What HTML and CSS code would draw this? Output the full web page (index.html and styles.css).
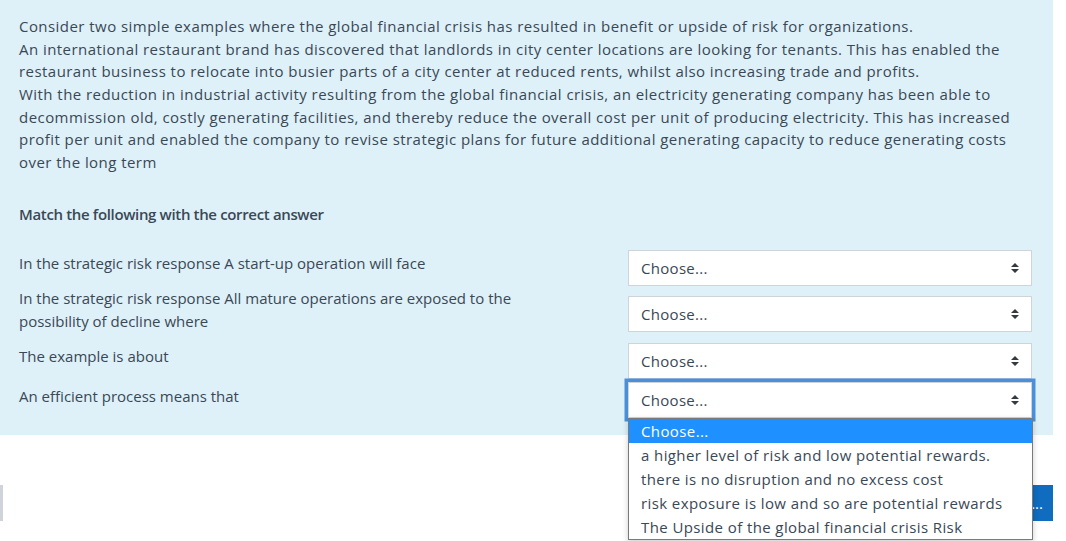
FILE: index.html
```html
<!DOCTYPE html>
<html lang="en">
<head>
  <meta charset="UTF-8">
  <title>Quiz question</title>
  <link rel="stylesheet" href="styles.css">
</head>
<body>

<div class="page">
  <div class="formulation">
    <div class="qtext">
      Consider two simple examples where the global financial crisis has resulted in benefit or upside of risk for organizations.<br>
      An international restaurant brand has discovered that landlords in city center locations are looking for tenants. This has enabled the restaurant business to relocate into busier parts of a city center at reduced rents, whilst also increasing trade and profits.<br>
      With the reduction in industrial activity resulting from the global financial crisis, an electricity generating company has been able to decommission old, costly generating facilities, and thereby reduce the overall cost per unit of producing electricity. This has increased profit per unit and enabled the company to revise strategic plans for future additional generating capacity to reduce generating costs over the long term
    </div>

    <div class="prompt">Match the following with the correct answer</div>

    <div class="answers">
      <div class="sub-row">
        <div class="sub-text">In the strategic risk response A start-up operation will face</div>
        <div class="select">
          <span>Choose...</span>
          <svg class="caret" width="8" height="10" viewBox="0 0 8 10"><path d="M4 0L8 4H0z M0 6H8L4 10z" fill="#343a40"/></svg>
        </div>
      </div>
      <div class="sub-row">
        <div class="sub-text">In the strategic risk response All mature operations are exposed to the possibility of decline where</div>
        <div class="select">
          <span>Choose...</span>
          <svg class="caret" width="8" height="10" viewBox="0 0 8 10"><path d="M4 0L8 4H0z M0 6H8L4 10z" fill="#343a40"/></svg>
        </div>
      </div>
      <div class="sub-row">
        <div class="sub-text">The example is about</div>
        <div class="select">
          <span>Choose...</span>
          <svg class="caret" width="8" height="10" viewBox="0 0 8 10"><path d="M4 0L8 4H0z M0 6H8L4 10z" fill="#343a40"/></svg>
        </div>
      </div>
      <div class="sub-row active">
        <div class="sub-text">An efficient process means that</div>
        <div class="select focused">
          <span>Choose...</span>
          <svg class="caret" width="8" height="10" viewBox="0 0 8 10"><path d="M4 0L8 4H0z M0 6H8L4 10z" fill="#343a40"/></svg>
          <ul class="options">
            <li class="selected">Choose...</li>
            <li>a higher level of risk and low potential rewards.</li>
            <li>there is no disruption and no excess cost</li>
            <li>risk exposure is low and so are potential rewards</li>
            <li>The Upside of the global financial crisis Risk</li>
          </ul>
        </div>
      </div>
    </div>
  </div>

  <div class="submitbtns">
    <div class="btn btn-prev"></div>
    <button class="btn btn-next">Finish attempt ...</button>
  </div>
</div>

</body>
</html>
```

FILE: styles.css
```css
body {
  font-family: 'Open Sans', sans-serif;
  font-size: 15px;
  color: #3a4856;
  background-color: white;
  margin: 0;
  padding: 0;
}

.page {
  width: 1053px;
  padding-bottom: 40px;
}

.formulation {
  background-color: #def1f8;
  padding: 15px 21px 17px 19px;
}

.qtext {
  line-height: 22.67px;
  letter-spacing: 0.45px;
}

.prompt {
  margin-top: 29px;
  font-weight: 600;
  line-height: 23px;
  letter-spacing: -0.35px;
}

.answers {
  margin-top: 16px;
}

.sub-row {
  display: flex;
  align-items: center;
  justify-content: space-between;
  margin-bottom: 1.5px;
}

.sub-row.active {
  margin-top: -6px;
  margin-bottom: 0;
}

.sub-text {
  width: 540px;
  line-height: 23px;
}

.select {
  position: relative;
  width: 404px;
  height: 36px;
  margin-top: 8px;
  box-sizing: border-box;
  border: 1px solid #ced4da;
  background-color: white;
  display: flex;
  align-items: center;
  justify-content: space-between;
  padding: 0 12px 0 12px;
  letter-spacing: 0.3px;
}

.select.focused {
  box-shadow: 0 0 0 3.5px #4a90d9;
}

.caret {
  display: block;
}

.options {
  position: absolute;
  top: 35px;
  left: -1px;
  width: 405px;
  box-sizing: border-box;
  margin: 0;
  padding: 0;
  list-style: none;
  background-color: white;
  border: 1px solid #7a7a7a;
  box-shadow: 0 2px 6px rgba(0,0,0,0.2);
  letter-spacing: 0.4px;
  z-index: 2;
}

.options li {
  height: 24px;
  line-height: 24px;
  padding-left: 12px;
}

.options li.selected {
  background-color: #1e90ff;
  color: white;
}

.submitbtns {
  display: flex;
  justify-content: space-between;
  margin-top: 50px;
}

.btn {
  font-family: 'Open Sans', sans-serif;
  font-size: 15px;
  height: 36px;
  border: none;
  padding: 0 10px;
  color: white;
}

.btn-prev {
  width: 3px;
  padding: 0;
  background-color: #ced4da;
}

.btn-next {
  background-color: #0f6cbf;
}
```
